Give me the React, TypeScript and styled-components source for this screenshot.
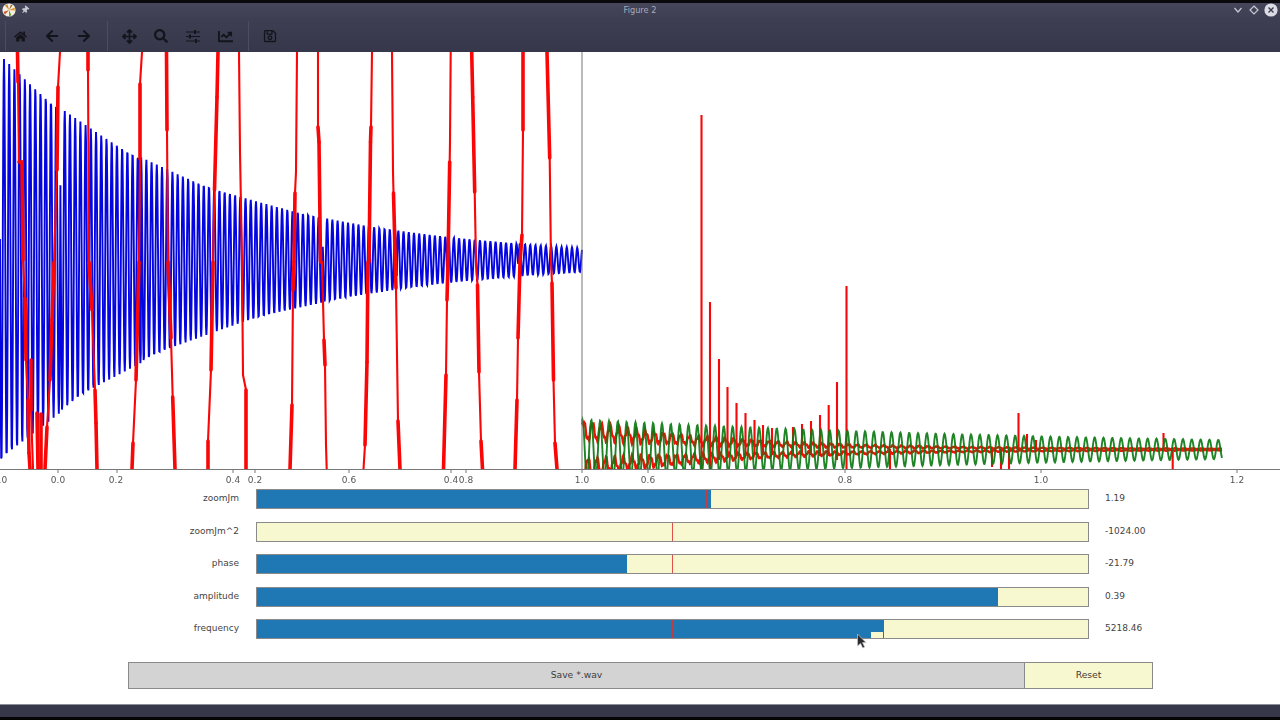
import styled, { createGlobalStyle } from "styled-components";
import {
	FaArrowLeft,
	FaArrowRight,
	FaArrowsAlt,
	FaChartLine,
	FaHome,
	FaRegSave,
	FaSearch,
	FaThumbtack,
} from "react-icons/fa";

const GlobalStyle = createGlobalStyle`
  html, body {
    margin: 0;
    padding: 0;
    background: #fff;
  }
  body {
    font-family: "DejaVu Sans", "Liberation Sans", sans-serif;
  }
`;

const Page = styled.div`
  width: 1280px;
  height: 720px;
  overflow: hidden;
  display: flex;
  flex-direction: column;
  background: #fff;
`;

const TopEdge = styled.div`
  height: 3px;
  background: #0a0a0c;
`;

const TitleBar = styled.div`
  height: 14px;
  display: grid;
  grid-template-columns: 1fr auto 1fr;
  align-items: center;
  background: linear-gradient(#45465a, #3f4054);
`;

const TitleLeft = styled.div`
  display: flex;
  align-items: center;
  gap: 5px;
  padding-left: 2px;
  color: #c6c7d0;
  font-size: 8px;
`;

const TitleRight = styled.div`
  display: flex;
  align-items: center;
  justify-content: flex-end;
  gap: 5.5px;
  padding-right: 2px;
`;

const Title = styled.div`
  font-size: 8.2px;
  color: #a9aab8;
`;

const Toolbar = styled.div`
  height: 32px;
  padding: 3px 0 0 5px;
  display: flex;
  align-items: center;
  background: linear-gradient(#3e3f53, #36374a);
`;

const ToolGroup = styled.div`
  display: flex;
  gap: 4px;
`;

const Separator = styled.div<{ $first?: boolean }>`
  width: 1px;
  height: 30px;
  background: #4c4d60;
  margin: ${({ $first }) => ($first ? "0" : "0 7px 0 9px")};
`;

const ToolButton = styled.div<{ $size?: number }>`
  width: 28px;
  height: 28px;
  display: flex;
  align-items: center;
  justify-content: center;
  color: #14151c;
  font-size: ${({ $size }) => $size ?? 13}px;
`;

const Plot = styled.svg`
  display: block;
  width: 1280px;
  height: 437px;
  flex-shrink: 0;
  filter: blur(0.3px);
`;

const TickLabel = styled.text`
  font-family: "DejaVu Sans", sans-serif;
  font-size: 9px;
  fill: #555;
  text-anchor: middle;
`;

const Sliders = styled.div`
  display: flex;
  flex-direction: column;
  gap: 12.6px;
`;

const SliderRow = styled.div`
  display: grid;
  grid-template-columns: 239px 833px auto;
  column-gap: 17px;
  height: 20px;
  align-items: center;
  font-size: 9px;
  color: #444;
`;

const SliderLabel = styled.div`
  text-align: right;
  padding-bottom: 2px;
`;

const SliderValue = styled.div`
  margin-left: -1px;
  padding-bottom: 2px;
`;

const Track = styled.div`
  position: relative;
  height: 20px;
  box-sizing: border-box;
  border: 1px solid #8a8a8a;
  background: #f8f8d0;
`;

const Fill = styled.div`
  height: 100%;
  background: #1f77b4;
`;

const Marker = styled.div`
  position: absolute;
  top: 0;
  bottom: 0;
  width: 1px;
  background: rgba(222, 50, 50, 0.85);
`;

const Notch = styled.div`
  position: absolute;
  left: 614px;
  bottom: 0;
  width: 12px;
  height: 6px;
  background: #f8f8d0;
`;

const Cursor = styled.svg`
  position: absolute;
  left: 599px;
  top: 13px;
  width: 11px;
  height: 16px;
`;

const Actions = styled.div`
  display: flex;
  margin: 23px 0 0 128px;
`;

const ActionButton = styled.div<{ $width: number; $color: string }>`
  width: ${({ $width }) => $width}px;
  height: 27px;
  box-sizing: border-box;
  border: 1px solid #8a8a8a;
  margin-right: -1px;
  padding-bottom: 2px;
  display: flex;
  align-items: center;
  justify-content: center;
  background: ${({ $color }) => $color};
  font-size: 9.2px;
  color: #3c3c3c;
`;

const Spacer = styled.div`
  flex: 1;
`;

const Footer = styled.div`
  height: 12px;
  border-top: 1px solid #8d8e99;
  background: #363749;
`;

const BottomEdge = styled.div`
  height: 3px;
  background: #050506;
`;

// damped sine on the left axes, the phase jumps where the signal was cut
const bluePath = () => {
	const jumps = [60, 141, 323, 397, 448, 518];
	const pts: string[] = [];
	for (let x = 0; x <= 582; x += 0.4) {
		const extra = jumps.filter((j) => x > j).length * 1.9;
		const amp = 201 * Math.exp(-(x - 4) / 205);
		const y = 260 - amp * Math.cos((2 * Math.PI * (x - 4 + extra)) / 5.22);
		pts.push(`${x.toFixed(1)},${y.toFixed(1)}`);
	}
	return pts.join(" ");
};

const greenPath = () => {
	const pts: string[] = [];
	for (let x = 582; x <= 1222; x += 0.5) {
		const amp = 30 * Math.exp(-(x - 582) / 560);
		const y = 449.5 - amp * Math.sin((2 * Math.PI * (x - 582)) / 8.83 + 1.2);
		pts.push(`${x.toFixed(1)},${y.toFixed(1)}`);
	}
	return pts.join(" ");
};

// the red signal on the right shows as two wavy bands that close up
const redBand = (side: number) => {
	const pts: string[] = [];
	for (let x = 582; x <= 1222; x += 0.5) {
		const p = (2 * Math.PI * (x - 582)) / 8.83 + 0.4;
		const amp = 28 * Math.exp(-(x - 582) / 150) + 0.6;
		const ripple = 0.66 + 0.3 * Math.sin(p) + 0.1 * Math.sin(p * 3.1);
		const y = 449.5 - side * amp * ripple;
		pts.push(`${x.toFixed(1)},${y.toFixed(1)}`);
	}
	return pts.join(" ");
};

// each trace: points of x, y and the stroke width of the piece leading to it
type TracePoint = [number, number, number];

const T = 2.1;
const W = 3.6;

const redTraces: TracePoint[][] = [
	[[17.5, 52, W], [18, 82, W], [19, 162, T], [22, 162, W], [23, 260, W], [25, 298, T], [26, 360, W], [28, 400, T], [29, 453, W], [30, 469, W]],
	[[60, 52, T], [58, 87, T], [57, 170, W], [54, 262, T], [52, 320, W], [50, 380, W], [47, 427, T], [45, 469, W]],
	[[88, 52, W], [88, 70, W], [89, 262, T], [92, 310, W], [95, 390, T], [96, 423, W], [97, 469, W]],
	[[142, 52, T], [140, 84, T], [140, 159, W], [139, 262, T], [136, 380, W], [133, 443, T], [132, 469, W]],
	[[166.5, 52, W], [167, 130, W], [168, 262, T], [171, 338, W], [172.7, 397, T], [175, 469, W]],
	[[218, 52, T], [217, 97, W], [214.5, 190, W], [213, 262, T], [211, 370, W], [208, 441, T], [208, 469, W]],
	[[239, 52, T], [240, 152, T], [242, 262, T], [243, 375, T], [246, 390, T], [246, 469, W]],
	[[297, 52, T], [296, 172, T], [295, 193, T], [294, 262, W], [293, 290, W], [292, 405, T], [290, 469, W]],
	[[318, 52, T], [318, 127, T], [319, 142, W], [320.5, 262, W], [322, 262, T], [324, 340, T], [325, 365, W], [326, 445, T], [326.7, 469, T]],
	[[372, 52, T], [371, 127, T], [370.5, 142, W], [369, 262, W], [368, 262, T], [367, 362, W], [365, 445, W], [363.5, 469, T]],
	[[392, 52, T], [393, 172, T], [393.5, 193, T], [395.3, 262, W], [396, 288, W], [398, 421, T], [400, 469, W]],
	[[450.7, 52, T], [450, 142, T], [449.7, 162, T], [448, 262, W], [447, 300, W], [446, 375, T], [443.5, 469, W]],
	[[471.7, 52, T], [472.7, 97, W], [474.7, 192, W], [476, 262, T], [477.5, 285, T], [479, 372, W], [481, 441, T], [482.5, 469, W]],
	[[523, 52, W], [523, 130, W], [522, 235, T], [520, 262, W], [518, 338, W], [517, 400, T], [515, 469, W]],
	[[547, 52, T], [549.7, 158, W], [551, 262, T], [552, 283, T], [553.5, 380, W], [555, 443, T], [557, 469, W]],
	[[31, 360, W], [31, 410, W], [33, 469, T]],
	[[37, 413, W], [38, 469, W]],
	[[41, 414, T], [41, 469, W]],
];

const spikes: [number, number, number][] = [
	[701.5, 115, 469], [710, 302, 469], [719, 359, 460], [727.5, 387, 458], [736.5, 403, 456], [745.5, 413, 456],
	[754.5, 420, 455], [763, 425, 455], [772, 428, 455], [793, 427, 455], [802, 424, 455], [811, 421, 455],
	[820, 415, 456], [828.7, 405, 456], [837, 382, 460], [846.5, 286, 469],
	[1018.5, 413, 450], [1027, 434, 450], [1036, 440, 450], [1163.5, 433, 450], [1172.7, 449, 469],
	[890, 449, 469], [992, 449, 467], [1001, 449, 469], [1009, 449, 469],
];

const ticks = [58, 117, 233, 255, 349, 451, 466, 582, 648, 845, 1041, 1237];
const tickLabels: [number, string][] = [
	[0, "1.0"], [58, "0.0"], [116, "0.2"], [233, "0.4"], [255, "0.2"], [349, "0.6"], [451, "0.4"], [466, "0.8"],
	[582, "1.0"], [648, "0.6"], [845, "0.8"], [1041, "1.0"], [1237, "1.2"],
];

const Figure = () => (
	<Plot viewBox="0 52 1280 437">
		<defs>
			<clipPath id="axes">
				<rect x="0" y="52" width="1280" height="417" />
			</clipPath>
		</defs>
		<g clipPath="url(#axes)" fill="none">
			<polyline points={bluePath()} stroke="#0505e0" strokeWidth="1.9" />
			<g stroke="#fa0606" strokeLinecap="round">
				{redTraces.map((trace, i) =>
					trace.slice(1).map((pt, j) => (
						<line
							key={`${i}-${j}`}
							x1={trace[j][0]}
							y1={trace[j][1]}
							x2={pt[0]}
							y2={pt[1]}
							strokeWidth={pt[2]}
						/>
					)),
				)}
			</g>
			<polyline points={redBand(1)} stroke="#f01208" strokeWidth="2.4" />
			<polyline points={redBand(-1)} stroke="#f01208" strokeWidth="2.4" />
			{spikes.map(([x, top, bottom]) => (
				<line key={x} x1={x} y1={top} x2={x} y2={bottom} stroke="#f60808" strokeWidth="2.1" />
			))}
			<polyline points={greenPath()} stroke="#0b7a12" strokeWidth="1.9" strokeOpacity="0.92" />
		</g>
		<line x1="582" y1="52" x2="582" y2="469" stroke="#777" />
		<line x1="0" y1="469.5" x2="1280" y2="469.5" stroke="#777" />
		{ticks.map((x) => (
			<line key={x} x1={x} y1="470" x2={x} y2="473" stroke="#777" />
		))}
		{tickLabels.map(([x, text]) => (
			<TickLabel key={`${x}${text}`} x={x} y="483">
				{text}
			</TickLabel>
		))}
	</Plot>
);

const Logo = () => (
	<svg width="14" height="14" viewBox="0 0 14 14">
		<circle cx="7" cy="7" r="6.6" fill="#f1ede0" />
		<path d="M7 7 3 2.5 5.5 1.2Z" fill="#d9822b" />
		<path d="M7 7 12.6 4.5 13 7.5Z" fill="#e0a030" />
		<path d="M7 7 9.5 12.5 7 13Z" fill="#6f9a3c" />
		<path d="M7 7 1.5 9 3 11.5Z" fill="#c85a2a" />
		<path d="M7 7 9 1.5 10.5 2.5Z" fill="#8c6a3a" />
	</svg>
);

const Chevron = () => (
	<svg width="10" height="10" viewBox="0 0 10 10" fill="none" stroke="#c9cad4" strokeWidth="1.2">
		<path d="M1.5 3 5 7l3.5-4" />
	</svg>
);

const Diamond = () => (
	<svg width="10" height="10" viewBox="0 0 10 10" fill="none" stroke="#c9cad4" strokeWidth="1.2">
		<path d="M5 1 9 5 5 9 1 5Z" />
	</svg>
);

const CloseButton = () => (
	<svg width="14" height="14" viewBox="0 0 14 14">
		<circle cx="7" cy="7" r="6.6" fill="#dcdde4" />
		<path d="M4.5 4.5l5 5M9.5 4.5l-5 5" stroke="#3a3b4e" strokeWidth="1.3" />
	</svg>
);

const SlidersIcon = () => (
	<svg width="14" height="13" viewBox="0 0 14 13" fill="#14151c">
		<path d="M0 1.5h14v1H0zM0 6h14v1H0zM0 10.5h14v1H0z" />
		<path d="M8 0h2v4H8zM3 4.5h2v4H3zM9 9h2v4H9z" />
	</svg>
);

type SliderData = {
	label: string;
	value: string;
	fill: number;
	marker?: number;
	hover?: boolean;
};

const sliders: SliderData[] = [
	{ label: "zoomJm", value: "1.19", fill: 454, marker: 449 },
	{ label: "zoomJm^2", value: "-1024.00", fill: 0, marker: 415 },
	{ label: "phase", value: "-21.79", fill: 370, marker: 415 },
	{ label: "amplitude", value: "0.39", fill: 741 },
	{ label: "frequency", value: "5218.46", fill: 627, marker: 415, hover: true },
];

export default function App() {
	return (
		<Page>
			<GlobalStyle />
			<TopEdge />
			<TitleBar>
				<TitleLeft>
					<Logo />
					<FaThumbtack style={{ transform: "rotate(40deg)" }} />
				</TitleLeft>
				<Title>Figure 2</Title>
				<TitleRight>
					<Chevron />
					<Diamond />
					<CloseButton />
				</TitleRight>
			</TitleBar>
			<Toolbar>
				<Separator $first />
				<ToolGroup>
					<ToolButton><FaHome /></ToolButton>
					<ToolButton $size={14}><FaArrowLeft /></ToolButton>
					<ToolButton $size={14}><FaArrowRight /></ToolButton>
				</ToolGroup>
				<Separator />
				<ToolGroup>
					<ToolButton $size={15}><FaArrowsAlt /></ToolButton>
					<ToolButton $size={14}><FaSearch /></ToolButton>
					<ToolButton><SlidersIcon /></ToolButton>
					<ToolButton $size={15}><FaChartLine /></ToolButton>
				</ToolGroup>
				<Separator />
				<ToolGroup>
					<ToolButton $size={14}><FaRegSave /></ToolButton>
				</ToolGroup>
			</Toolbar>
			<Figure />
			<Sliders>
				{sliders.map((s) => (
					<SliderRow key={s.label}>
						<SliderLabel>{s.label}</SliderLabel>
						<Track>
							<Fill style={{ width: s.fill }} />
							{s.marker !== undefined && <Marker style={{ left: s.marker }} />}
							{s.hover && <Notch />}
							{s.hover && (
								<Cursor viewBox="0 0 11 16">
									<path
										d="M1.5 1v12l3-2.6 2.2 4.6 2-1-2.2-4.4H10Z"
										fill="#2c2c30"
										stroke="#c8c8cc"
										strokeWidth="0.7"
									/>
								</Cursor>
							)}
						</Track>
						<SliderValue>{s.value}</SliderValue>
					</SliderRow>
				))}
			</Sliders>
			<Actions>
				<ActionButton $width={897} $color="#d3d3d3">Save *.wav</ActionButton>
				<ActionButton $width={129} $color="#f8f8d0">Reset</ActionButton>
			</Actions>
			<Spacer />
			<Footer />
			<BottomEdge />
		</Page>
	);
}
